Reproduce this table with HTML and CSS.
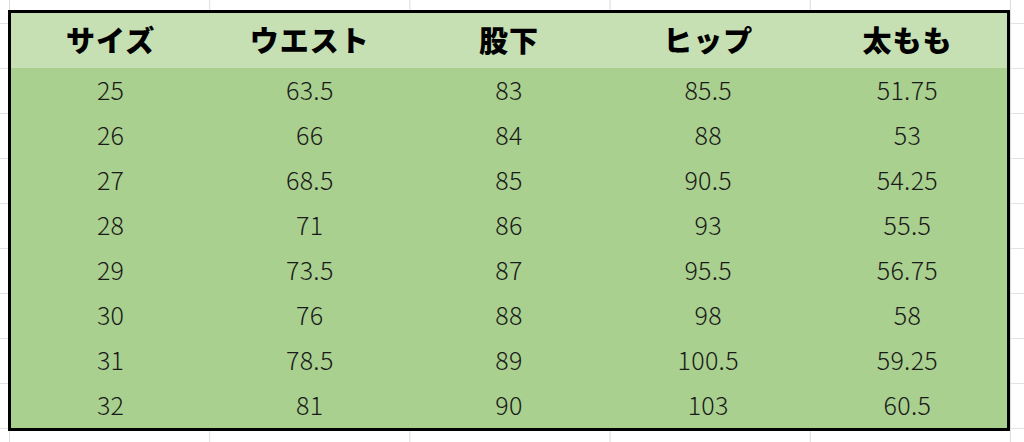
FILE: index.html
```html
<!DOCTYPE html>
<html lang="ja">
<head>
<meta charset="utf-8">
<title>サイズ表</title>
<link rel="stylesheet" href="styles.css">
</head>
<body>
<div class="sheet">
  <div class="size-table">
    <div class="cell head">サイズ</div>
    <div class="cell head">ウエスト</div>
    <div class="cell head">股下</div>
    <div class="cell head">ヒップ</div>
    <div class="cell head">太もも</div>

    <div class="cell">25</div><div class="cell">63.5</div><div class="cell">83</div><div class="cell">85.5</div><div class="cell">51.75</div>
    <div class="cell">26</div><div class="cell">66</div><div class="cell">84</div><div class="cell">88</div><div class="cell">53</div>
    <div class="cell">27</div><div class="cell">68.5</div><div class="cell">85</div><div class="cell">90.5</div><div class="cell">54.25</div>
    <div class="cell">28</div><div class="cell">71</div><div class="cell">86</div><div class="cell">93</div><div class="cell">55.5</div>
    <div class="cell">29</div><div class="cell">73.5</div><div class="cell">87</div><div class="cell">95.5</div><div class="cell">56.75</div>
    <div class="cell">30</div><div class="cell">76</div><div class="cell">88</div><div class="cell">98</div><div class="cell">58</div>
    <div class="cell">31</div><div class="cell">78.5</div><div class="cell">89</div><div class="cell">100.5</div><div class="cell">59.25</div>
    <div class="cell">32</div><div class="cell">81</div><div class="cell">90</div><div class="cell">103</div><div class="cell">60.5</div>
  </div>
</div>
</body>
</html>
```

FILE: styles.css
```css
html, body {
  margin: 0;
  padding: 0;
}

body {
  width: 1024px;
  height: 442px;
  overflow: hidden;
  background-color: #ffffff;
  background-image:
    linear-gradient(to right, #dcdcdc 1px, transparent 1px),
    linear-gradient(to bottom, #e2e2e2 1px, transparent 1px);
  background-size: 200.2px 100%, 100% 45px;
  background-position: 9px 0, 0 23px;
  font-family: "Noto Sans CJK JP", "Noto Sans", sans-serif;
}

.sheet {
  padding: 10px 0 0 8px;
}

.size-table {
  width: 996px;
  border: 3px solid #000;
  display: grid;
  grid-template-columns: repeat(5, 1fr);
  grid-template-rows: 55px repeat(8, 45px);
  background: #a9d08e;
}

.cell {
  display: flex;
  align-items: center;
  justify-content: center;
  padding-bottom: 4px;
  font-size: 25px;
  color: #1a1a1a;
  font-weight: 300;
  letter-spacing: 0.3px;
}

.head {
  background: #c6e0b4;
  padding-bottom: 3px;
  font-size: 29px;
  font-weight: 900;
  color: #000;
  letter-spacing: 1px;
}
```
